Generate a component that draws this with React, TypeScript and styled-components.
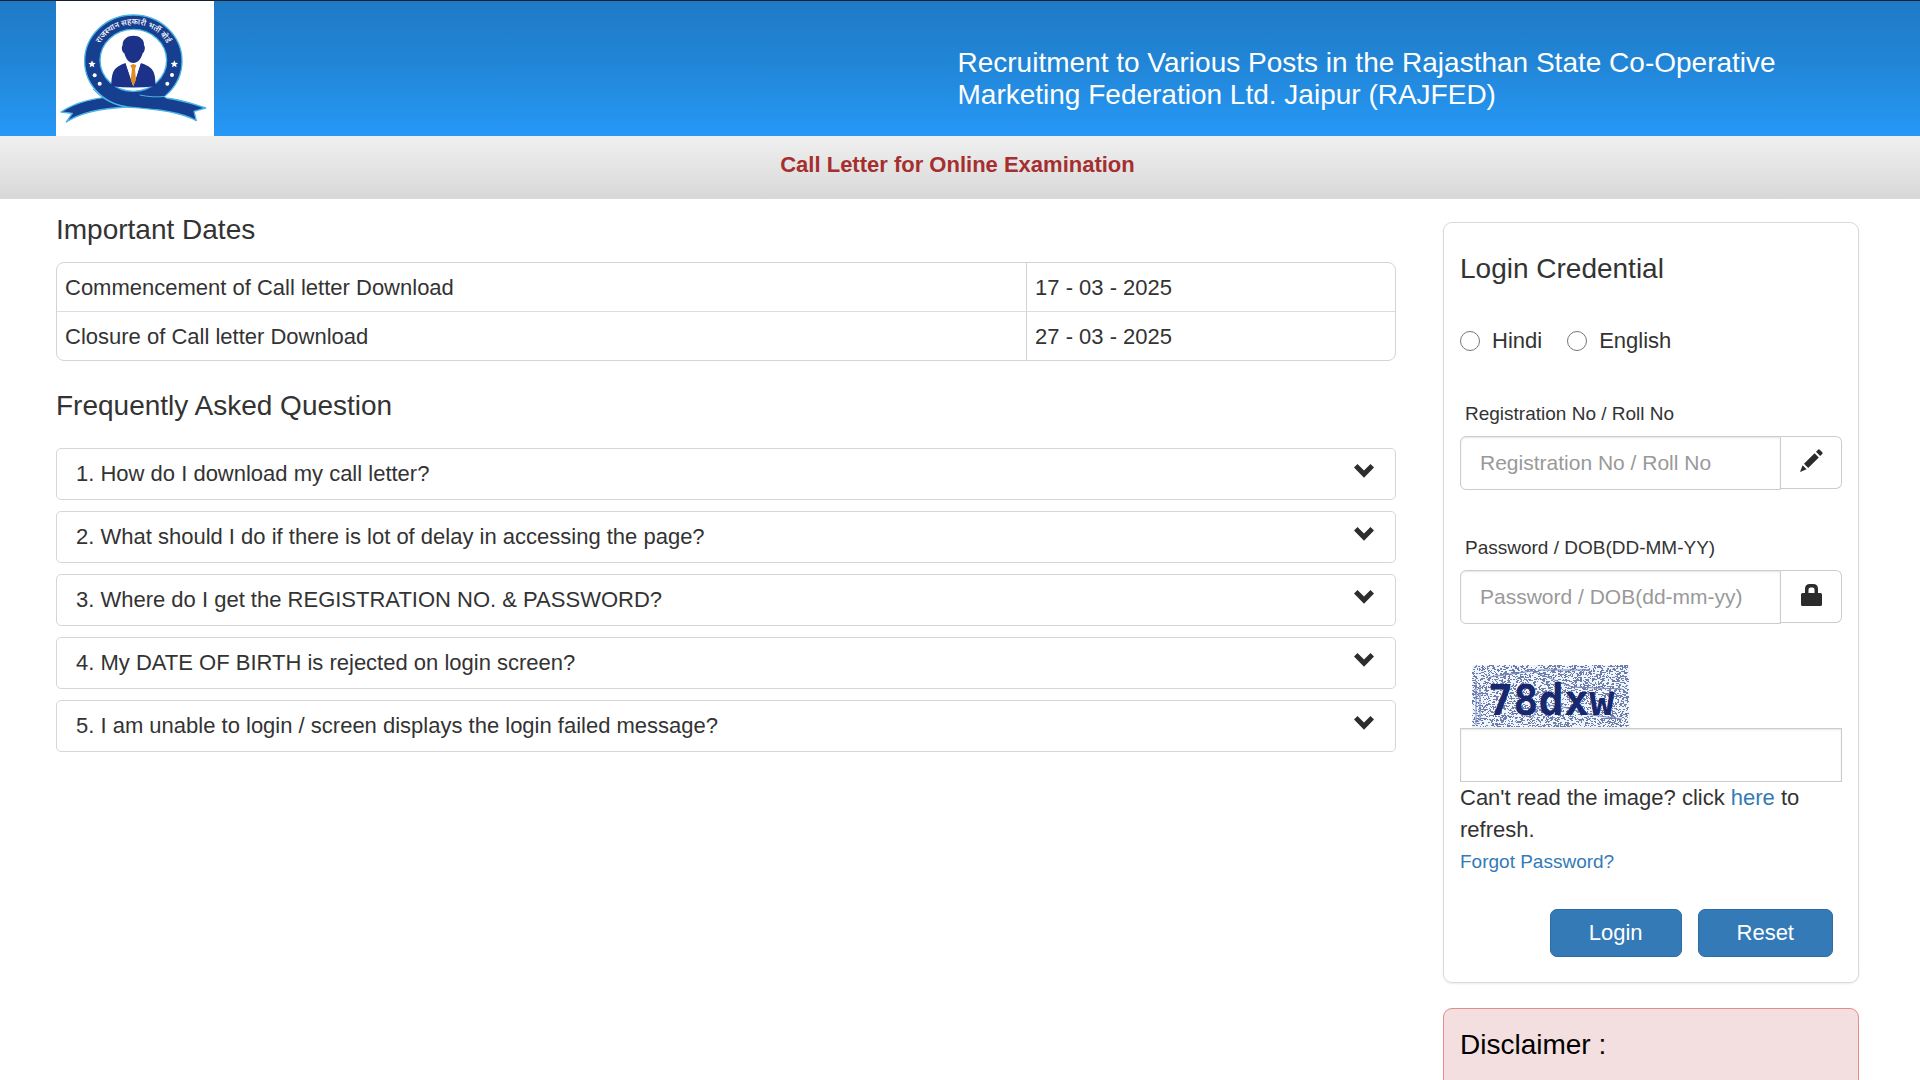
import React, { useState } from "react";
import styled, { createGlobalStyle } from "styled-components";

const GlobalStyle = createGlobalStyle`
  *, *::before, *::after { box-sizing: border-box; }
  body {
    margin: 0;
    background: #fff;
    color: #333;
    font-family: "Liberation Sans", Arial, Helvetica, sans-serif;
    font-size: 22px;
    line-height: 32px;
  }
`;

const Page = styled.div`
  height: 100vh;
  overflow: hidden;
`;

const Header = styled.header`
  display: grid;
  grid-template-columns: 1fr 1fr;
  padding: 0 61px 0 56px;
  border-top: 1px solid #14202b;
  background: linear-gradient(#1f7ac7, #2185d6 45%, #2698f6);
`;

const Logo = styled.svg`
  display: block;
  width: 158px;
  height: 135px;
  background: #fff;
`;

const Title = styled.h1`
  margin: 0;
  padding-top: 46px;
  color: #fff;
  font-size: 28px;
  font-weight: 400;
  line-height: 32px;
`;

const SubBar = styled.div`
  padding: 13px 61px 18px 56px;
  background: linear-gradient(#f0f0f0, #d8d8d8);
  color: #a52f2f;
  font-weight: 700;
  text-align: center;
`;

const Main = styled.main`
  display: grid;
  grid-template-columns: minmax(0, 1fr) 416px;
  column-gap: 47px;
  padding: 0 61px 0 56px;
`;

const Info = styled.div`
  padding-top: 15px;
`;

const Heading = styled.h2`
  margin: 0;
  font-size: 28px;
  font-weight: 400;
  line-height: 32px;
`;

const Dates = styled.table`
  width: 100%;
  margin: 16px 0 29px;
  border: 1px solid #d4d4d4;
  border-radius: 8px;
  border-spacing: 0;
  table-layout: fixed;
`;

const DateName = styled.th`
  width: 72.5%;
  padding: 9px 8px 7px;
  border-right: 1px solid #d4d4d4;
  font-weight: 400;
  text-align: left;
  tr + tr > & { border-top: 1px solid #ddd; }
`;

const DateValue = styled.td`
  padding: 9px 8px 7px;
  tr + tr > & { border-top: 1px solid #ddd; }
`;

const Questions = styled.div`
  display: flex;
  flex-direction: column;
  gap: 11px;
  margin-top: 26px;
`;

const Question = styled.button`
  display: flex;
  align-items: center;
  justify-content: space-between;
  padding: 9px 21px 9px 19px;
  border: 1px solid #d6d6d6;
  border-radius: 5px;
  background: #fff;
  color: inherit;
  font: inherit;
  text-align: left;
  cursor: pointer;
`;

const Chevron = styled.svg`
  width: 20px;
  height: 14px;
  margin-bottom: 6px;
  fill: #2d2d2d;
`;

const Side = styled.aside`
  display: flex;
  flex-direction: column;
  gap: 25px;
  padding-top: 23px;
`;

const LoginCard = styled.form`
  padding: 30px 16px 25px;
  border: 1px solid #d9d9d9;
  border-radius: 9px;
  box-shadow: 0 1px 2px rgba(0, 0, 0, 0.08);
`;

const Languages = styled.div`
  display: flex;
  gap: 25px;
  margin: 40px 0 44px;
`;

const Language = styled.label`
  display: flex;
  align-items: center;
  gap: 12px;
`;

const Radio = styled.input`
  appearance: none;
  width: 20px;
  height: 20px;
  margin: 0;
  border: 1px solid #767676;
  border-radius: 50%;
  background: #fff;
  &:checked { border: 6px solid #337ab7; }
`;

const Field = styled.div`
  & + & { margin-top: 45px; }
`;

const FieldLabel = styled.label`
  display: block;
  padding-left: 5px;
  font-size: 19px;
  line-height: 26px;
`;

const InputGroup = styled.div`
  display: flex;
  align-items: flex-start;
  margin-top: 9px;
`;

const TextInput = styled.input<{ $plain?: boolean }>`
  flex: 1;
  display: block;
  width: 100%;
  min-width: 0;
  height: 54px;
  padding: 0 19px;
  border: 1px solid #ccc;
  border-radius: ${(p) => (p.$plain ? "0" : "6px 0 0 6px")};
  background: #fff;
  box-shadow: inset 0 1px 2px rgba(0, 0, 0, 0.1);
  color: #555;
  font: inherit;
  font-size: 21px;
  &::placeholder { color: #999; opacity: 1; }
`;

const Addon = styled.span`
  display: flex;
  align-items: center;
  justify-content: center;
  width: 61px;
  height: 53px;
  padding-bottom: 4px;
  border: 1px solid #ccc;
  border-left: 0;
  border-radius: 0 6px 6px 0;
`;

const Captcha = styled.svg`
  display: block;
  width: 158px;
  height: 63px;
  margin: 41px 0 0 12px;
  font-family: "DejaVu Sans Mono", monospace;
`;

const Hint = styled.p`
  margin: 0 0 3px;
`;

const Link = styled.a<{ $small?: boolean }>`
  color: #337ab7;
  text-decoration: none;
  ${(p) => p.$small && "display: block; font-size: 19px; line-height: 26px;"}
`;

const Actions = styled.div`
  display: flex;
  justify-content: flex-end;
  gap: 16px;
  margin-top: 34px;
  padding-right: 9px;
`;

const Action = styled.button`
  height: 48px;
  padding: 0 38px;
  border: 1px solid #2e6da4;
  border-radius: 7px;
  background: #337ab7;
  color: #fff;
  font: inherit;
  cursor: pointer;
`;

const Disclaimer = styled.section`
  min-height: 200px;
  padding: 20px 16px;
  border: 1px solid #e38d8b;
  border-radius: 9px;
  background: #f3dfdf;
  color: #000;
`;

const dates = [
  ["Commencement of Call letter Download", "17 - 03 - 2025"],
  ["Closure of Call letter Download", "27 - 03 - 2025"],
];

const questions = [
  "1. How do I download my call letter?",
  "2. What should I do if there is lot of delay in accessing the page?",
  "3. Where do I get the REGISTRATION NO. & PASSWORD?",
  "4. My DATE OF BIRTH is rejected on login screen?",
  "5. I am unable to login / screen displays the login failed message?",
];

/* Speckles for the captcha background, from a small seeded generator. */
function speckles(count: number, seed: number) {
  let s = seed;
  const next = () => {
    s = (s * 16807) % 2147483647;
    return s / 2147483647;
  };
  let d = "";
  for (let i = 0; i < count; i++) {
    const x = Math.floor(next() * 156);
    const y = Math.floor(next() * 62);
    const w = next() > 0.6 ? 2 : 1;
    d += `M${x} ${y}h${w}v1h-${w}z`;
  }
  return d;
}
const greySpeckles = speckles(2200, 77);
const blueSpeckles = speckles(1200, 4242);

function BoardLogo() {
  return (
    <Logo viewBox="49 3 474 405" preserveAspectRatio="none" role="img" aria-label="Board logo">
      <defs>
        <path id="arc" d="M174 145A114 110 0 0 1 388 145" />
      </defs>
      <g fill="#173f8f" stroke="#48b4e6" strokeWidth="4" strokeLinejoin="round">
        <path d="M300 290C370 286 430 300 498 324L463 334L470 362C430 338 350 326 262 321Z" />
        <path d="M230 290C170 292 110 306 64 336L98 340L80 366C130 332 200 324 262 321Z" />
        <ellipse cx="281" cy="183" rx="146" ry="138" />
        <ellipse cx="281" cy="181" rx="100" ry="93" fill="#fff" />
      </g>
      <path d="M168 262C200 292 235 296 262 319Q300 322 350 327L420 320L372 291L396 262C370 284 330 284 300 282C250 290 210 286 184 262Z" fill="#173f8f" />
      <path d="M160 267C190 300 222 314 262 321M300 285C330 291 352 292 376 289" fill="none" stroke="#48b4e6" strokeWidth="3" />
      <g fill="#1b3288">
        <path d="M249 136C247 98 316 98 313 136C318 141 315 157 309 160C303 181 292 189 281 189C270 189 260 181 254 160C247 157 244 141 249 136Z" />
        <path d="M215 259C216 213 222 202 258 189L281 258L303 189C341 202 347 213 348 259Q281 266 215 259Z" />
      </g>
      <path d="M258 189L281 258L303 189L293 186Q281 198 267 186Z" fill="#fff" />
      <path d="M272 196L281 192L290 196L286 207L289 240L281 257L273 240L277 207Z" fill="#df8d25" />
      <g fill="#fff">
        <path d="M157 181l3 7 8 1-6 5 2 8-7-4-7 4 2-8-6-5 8-1zM404 181l3 7 8 1-6 5 2 8-7-4-7 4 2-8-6-5 8-1z" />
        <circle cx="165" cy="226" r="6" />
        <circle cx="180" cy="251" r="6" />
        <circle cx="397" cy="225" r="6" />
        <circle cx="383" cy="251" r="6" />
        <text fontSize="24" fontWeight="500" fontFamily='"Noto Sans", sans-serif' textAnchor="middle">
          <textPath href="#arc" startOffset="50%">राजस्थान सहकारी भर्ती बोर्ड</textPath>
        </text>
      </g>
    </Logo>
  );
}

export default function App() {
  const [language, setLanguage] = useState("");
  return (
    <Page>
      <GlobalStyle />
      <Header>
        <BoardLogo />
        <Title>
          Recruitment to Various Posts in the Rajasthan State Co-Operative Marketing Federation Ltd. Jaipur (RAJFED)
        </Title>
      </Header>
      <SubBar>Call Letter for Online Examination</SubBar>
      <Main>
        <Info>
          <Heading>Important Dates</Heading>
          <Dates>
            <tbody>
              {dates.map(([name, value]) => (
                <tr key={name}>
                  <DateName scope="row">{name}</DateName>
                  <DateValue>{value}</DateValue>
                </tr>
              ))}
            </tbody>
          </Dates>
          <Heading>Frequently Asked Question</Heading>
          <Questions>
            {questions.map((q) => (
              <Question key={q} type="button">
                {q}
                <Chevron viewBox="0 0 20 14" aria-hidden="true">
                  <path d="M0 3.5 3.5 0 10 6.5 16.5 0 20 3.5 10 13.8z" />
                </Chevron>
              </Question>
            ))}
          </Questions>
        </Info>
        <Side>
          <LoginCard onSubmit={(e) => e.preventDefault()}>
            <Heading>Login Credential</Heading>
            <Languages>
              {["Hindi", "English"].map((name) => (
                <Language key={name}>
                  <Radio
                    type="radio"
                    name="language"
                    checked={language === name}
                    onChange={() => setLanguage(name)}
                  />
                  {name}
                </Language>
              ))}
            </Languages>
            <Field>
              <FieldLabel htmlFor="registration">Registration No / Roll No</FieldLabel>
              <InputGroup>
                <TextInput id="registration" type="text" placeholder="Registration No / Roll No" />
                <Addon>
                  <svg width="23" height="23" viewBox="0 0 23 23" fill="#2b2b2b" aria-hidden="true">
                    <path d="M0 23 2.6 16.2 6.6 20.3zM4 14.8 14.6 4.2 18.8 8.4 8.2 19zM16 2.8 18 .8Q18.900-.1 19.800.8L22.200 3.200Q23.100 4.100 22.200 5L20.200 7z" />
                  </svg>
                </Addon>
              </InputGroup>
            </Field>
            <Field>
              <FieldLabel htmlFor="password">Password / DOB(DD-MM-YY)</FieldLabel>
              <InputGroup>
                <TextInput id="password" type="password" placeholder="Password / DOB(dd-mm-yy)" />
                <Addon>
                  <svg width="21" height="22" viewBox="0 0 21 22" fill="#2b2b2b" aria-hidden="true">
                    <path
                      fillRule="evenodd"
                      d="M4 9V5Q4 0 9 0H12Q17 0 17 5V9H19.500Q21 9 21 10.500V20.500Q21 22 19.500 22H1.500Q0 22 0 20.500V10.500Q0 9 1.500 9zM7.500 9H13.500V5.500Q13.500 3.500 11.500 3.500H9.500Q7.500 3.500 7.500 5.500z"
                    />
                  </svg>
                </Addon>
              </InputGroup>
            </Field>
            <Captcha viewBox="0 0 158 63" role="img" aria-label="Captcha">
              <rect width="158" height="63" fill="#eef5fd" />
              <path d={greySpeckles} fill="#77809f" />
              <path d={blueSpeckles} fill="#6478b8" />
              <path
                d="M4 60V16M8 56V20M18 12L60 6L80 14L100 22L150 24M60 54L66 42L84 40L120 50L150 54M66 5H118"
                fill="none"
                stroke="#7483b8"
              />
              <text x="16" y="50" fontSize="42" fontWeight="700" fill="#18286f">
                78dxw
              </text>
            </Captcha>
            <TextInput $plain type="text" aria-label="Captcha text" />
            <Hint>
              Can't read the image? click <Link href="#refresh">here</Link> to refresh.
            </Hint>
            <Link $small href="#forgot">
              Forgot Password?
            </Link>
            <Actions>
              <Action type="submit">Login</Action>
              <Action type="reset">Reset</Action>
            </Actions>
          </LoginCard>
          <Disclaimer>
            <Heading>Disclaimer :</Heading>
          </Disclaimer>
        </Side>
      </Main>
    </Page>
  );
}
